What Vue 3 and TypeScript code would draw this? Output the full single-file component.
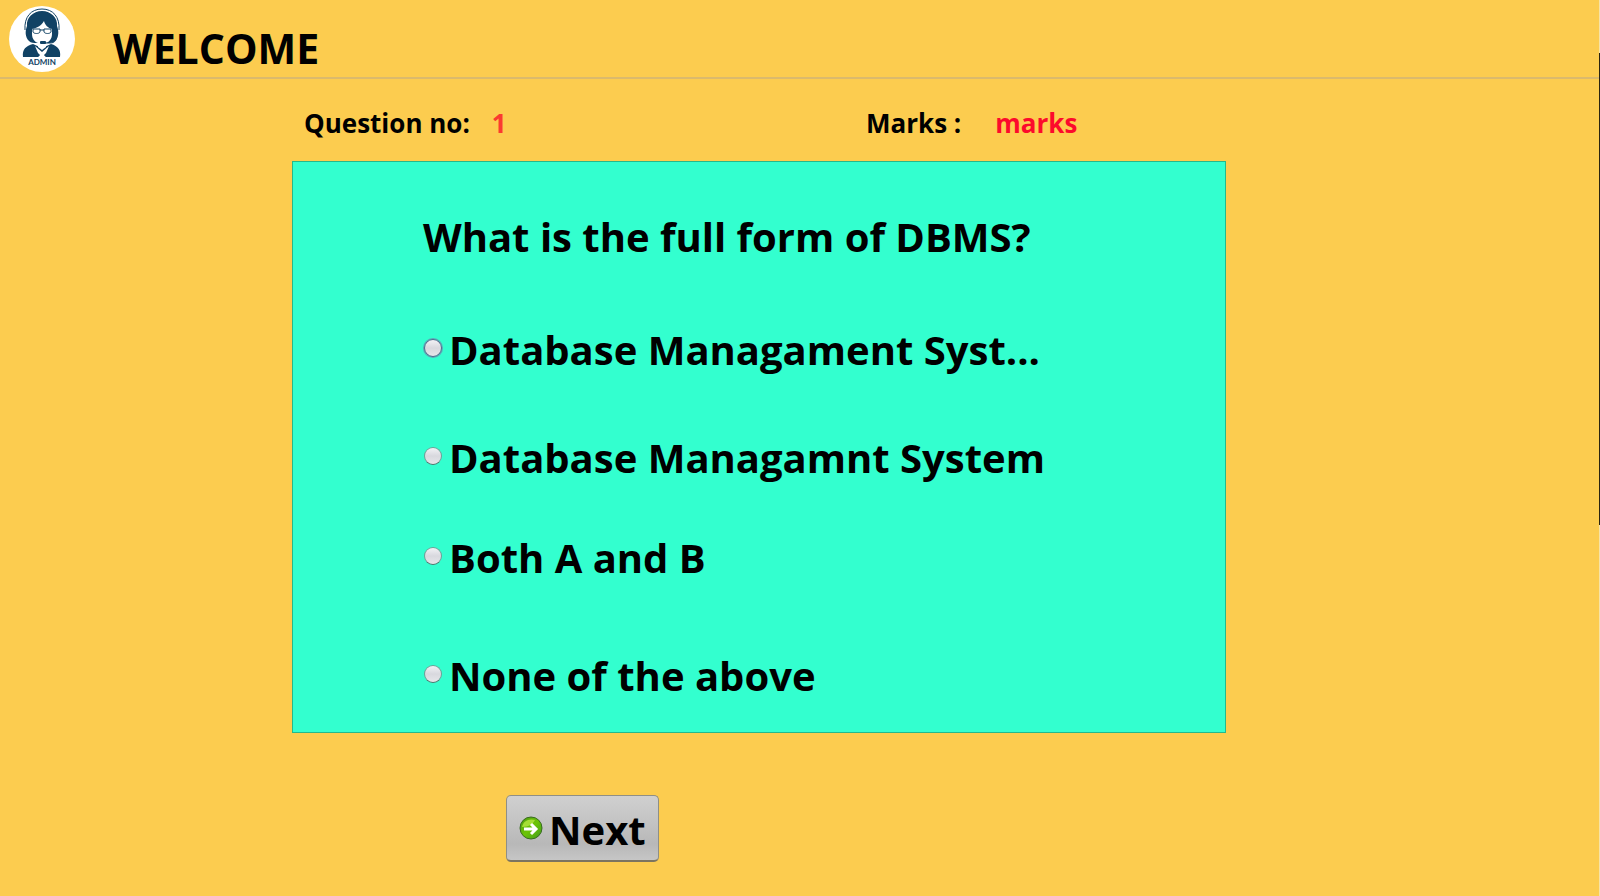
<script setup lang="ts">
import { ref } from 'vue'

interface Option {
  id: string
  label: string
}

const questionNumber = ref(1)
const marks = ref('marks')
const selected = ref('')
const options: Option[] = [
  { id: 'a', label: 'Database Managament Syst...' },
  { id: 'b', label: 'Database Managamnt System' },
  { id: 'c', label: 'Both A and B' },
  { id: 'd', label: 'None of the above' },
]
</script>

<template>
  <div class="page">
    <header class="header">
      <svg class="avatar" viewBox="0 0 66 66" role="img" aria-label="Admin">
        <circle cx="33" cy="33" r="33" fill="#fff" />
        <g fill="#114264">
          <path d="M20 35c-4-4-4-10-2-15-1-8 6-15 15-15s16 7 15 15c2 5 2 11-2 15-2 2-5 2-8 2H28c-3 0-6 0-8-2z" />
          <path d="M14 51c-1-8 3-11 10-13l9 4 9-4c7 2 10 6 9 13H37l-4-3-4 3z" />
        </g>
        <path d="M23 23c5-1 9-3 12-8 1 4 4 7 8 8v5c0 5-3 8-6 9v4l-4 3-4-3v-4c-3-1-6-4-6-9z" fill="#fff" />
        <path d="M26 40l7 6 7-6-3 7-2 2 1 2h-6l1-2-2-2z" fill="#fff" />
        <g fill="none" stroke="#114264">
          <path d="M16 24C15 11 22 3 33 3s18 8 17 21" stroke-width="1" />
          <path d="M24 23h7v3c-1 2-6 2-7 0zM35 23h7v3c-1 2-6 2-7 0zM31 24h4" stroke-width="1" />
          <path d="M48 28c0 6-2 9-7 9h-6" stroke-width="1" />
        </g>
        <rect x="31" y="35" width="6" height="3" rx="1" fill="#114264" />
        <text x="33" y="59" text-anchor="middle" class="avatar-text">ADMIN</text>
      </svg>
      <h1 class="title">WELCOME</h1>
    </header>

    <main class="quiz">
      <div class="status">
        <p class="status-item">
          <span>Question no:</span><span class="number">{{ questionNumber }}</span>
        </p>
        <p class="status-item marks">
          <span>Marks :</span><span class="marks-value">{{ marks }}</span>
        </p>
      </div>

      <fieldset class="panel">
        <legend class="question">What is the full form of DBMS?</legend>
        <label v-for="option in options" :key="option.id" class="option" :for="option.id">
          <input :id="option.id" v-model="selected" class="radio" type="radio" name="answer" :value="option.id" />
          <span>{{ option.label }}</span>
        </label>
      </fieldset>

      <button class="next" type="button">
        <svg class="next-icon" viewBox="0 0 24 24" aria-hidden="true">
          <defs>
            <linearGradient id="leaf" x1="0" y1="0" x2="1" y2="1">
              <stop offset="0" stop-color="#4f9a10" />
              <stop offset="0.5" stop-color="#6cc405" />
              <stop offset="1" stop-color="#3f9a1c" />
            </linearGradient>
          </defs>
          <circle cx="12" cy="12" r="11" fill="url(#leaf)" stroke="#3a6b22" stroke-width="1" />
          <path d="M3 11C4 5 10 2 16 4c-2 4-6 7-13 7z" fill="#a5de35" />
          <path d="M5 13h12M12 8l5 5-5 5" fill="none" stroke="#fff" stroke-width="3" />
        </svg>
        <span>Next</span>
      </button>
    </main>
    <div class="edge" aria-hidden="true"></div>
  </div>
</template>

<style>
body {
  margin: 0;
  background: #fccc4f;
}
</style>

<style scoped>
.page {
  position: relative;
  min-height: 100vh;
  box-sizing: border-box;
  background: #fccc4f;
  color: #000;
  font-family: "Open Sans", "Noto Sans", sans-serif;
  font-size: 40px;
  font-weight: 700;
  line-height: 48px;
}

.header {
  display: flex;
  gap: 38px;
  padding: 6px 9px 5px;
  border-bottom: 2px solid #dbba6c;
}

.avatar {
  width: 66px;
  height: 66px;
}

.avatar-text {
  fill: #114264;
  font-family: Lato, sans-serif;
  font-size: 8px;
  font-weight: 700;
}

.title {
  margin: 18px 0 0;
  font-size: 41px;
  line-height: inherit;
}

.quiz {
  display: grid;
  grid-template-columns: 292fr 934fr 374fr;
  padding-top: 26px;
}

.quiz > * {
  grid-column: 2;
}

.status {
  display: grid;
  grid-template-columns: 562fr 360fr;
  padding-left: 12px;
  font-size: 26px;
  line-height: 36px;
}

.status-item {
  display: flex;
  gap: 22px;
  margin: 0;
}

.status-item.marks {
  gap: 34px;
}

.number {
  color: #fb3a30;
}

.marks-value {
  color: #fc0a2c;
}

.panel {
  min-width: 0;
  margin: 20px 0 0;
  padding: 51px 16px 32px 130px;
  border: 1px solid #25b98c;
  background: #33ffcf;
}

.question {
  float: left;
  width: 100%;
  padding: 0;
}

.option {
  display: flex;
  clear: both;
  align-items: center;
  gap: 7px;
  padding: 52px 0 0 1px;
}

.option:nth-of-type(1) {
  padding-top: 65px;
}

.option:nth-of-type(2) {
  padding-top: 60px;
}

.option:nth-of-type(4) {
  padding-top: 70px;
}

.radio {
  flex: none;
  box-sizing: border-box;
  width: 18px;
  height: 18px;
  margin: 0 0 4px;
  appearance: none;
  border: 1px solid #6f9f96;
  border-bottom-color: #52736d;
  border-radius: 50%;
  background: linear-gradient(#f2f2f5, #d8d8de 50%, #e6e6ea);
}

.radio:checked {
  background: radial-gradient(circle, #333 30%, #e2e2e6 35%);
}

.option:nth-of-type(1) .radio {
  border-color: #56668c;
  box-shadow: 0 0 0 1px #5fa6b8;
}

.next {
  display: flex;
  justify-self: start;
  align-items: center;
  gap: 6px;
  margin: 62px 0 0 214px;
  padding: 10px 12px 6px;
  border: 1px solid #8f8f86;
  border-bottom: 2px solid #7c7460;
  border-radius: 5px;
  background: linear-gradient(#d0d0d0, #c2c2c2 45%, #b8b8b8 75%, #c6c6c6);
  color: #000;
  font: inherit;
}

.next-icon {
  width: 24px;
  height: 24px;
  margin-bottom: 4px;
}

.edge {
  position: absolute;
  top: 0;
  right: 0;
  width: 1px;
  height: 100%;
  background: linear-gradient(#f7e3a5 53px, #29230f 53px 525px, #f7e3a5 525px);
}
</style>
